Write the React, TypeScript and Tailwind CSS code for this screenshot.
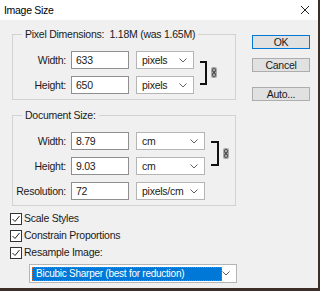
import React from 'react';

const font = { fontFamily: '"Liberation Sans", Arial, sans-serif' };

function Chevron() {
	return (
		<svg width="8" height="5" viewBox="0 0 8 5" className="shrink-0">
			<path d="M0.5 0.5 L4 4 L7.5 0.5" fill="none" stroke="#606060" strokeWidth="1" />
		</svg>
	);
}

function ChainIcon() {
	return (
		<svg width="6" height="11" viewBox="0 0 6 11" className="shrink-0">
			<rect x="0" y="0" width="6" height="11" rx="2" fill="#a9a9a9" />
			<rect x="1.5" y="1.5" width="3" height="3.5" rx="1.2" fill="none" stroke="#333" strokeWidth="0.8" />
			<rect x="1.5" y="6" width="3" height="3.5" rx="1.2" fill="none" stroke="#333" strokeWidth="0.8" />
			<line x1="3" y1="4" x2="3" y2="7" stroke="#333" strokeWidth="0.8" />
		</svg>
	);
}

function Field({ label, value, unit, selectW }: { label: string; value: string; unit: string; selectW: string }) {
	return (
		<div className="flex h-[18px] items-center">
			<span className="w-[54px] pr-[1px] text-right">{label}</span>
			<div className="ml-[4px] flex h-[18px] w-[58px] items-center border border-[#8f8f8f] bg-white pl-[4px]">{value}</div>
			<div className={`ml-[7px] flex h-[18px] ${selectW} items-center justify-between border border-[#b5b5b5] bg-white pl-[5px] pr-[6px]`}>
				<span>{unit}</span>
				<Chevron />
			</div>
		</div>
	);
}

function Check({ label }: { label: string }) {
	return (
		<div className="flex h-[17px] items-center">
			<div className="flex h-[12px] w-[12px] items-center justify-center border border-[#333] bg-white">
				<svg width="10" height="10" viewBox="0 0 10 10">
					<path d="M1.5 5 L4 7.5 L8.5 2" fill="none" stroke="#222" strokeWidth="1" />
				</svg>
			</div>
			<span className="ml-[2px]">{label}</span>
		</div>
	);
}

export default function App() {
	return (
		<div className="h-[291px] w-[320px] bg-[#3b2e26]" style={font}>
			<div className="flex h-[288px] w-[318px] flex-col bg-[#f0f0f0] text-[10.5px] leading-none tracking-[-0.25px] text-[#1a1a1a]">
				<div className="flex h-[20px] shrink-0 items-center justify-between bg-white pl-[4px] pr-[8px] text-[10.5px] tracking-[-0.3px] text-black">
					<span>Image Size</span>
					<svg width="10" height="10" viewBox="0 0 10 10">
						<path d="M1 1 L9 9 M9 1 L1 9" stroke="#222" strokeWidth="1" />
					</svg>
				</div>
				<div className="flex">
					<div className="flex flex-col pl-[12px]">
						<fieldset className="mt-[9px] h-[71px] w-[224px] border border-[#d3d3d3]">
							<legend className="ml-[9px] px-[3px] leading-[11px]">Pixel Dimensions:&nbsp;&nbsp;1.18M (was 1.65M)</legend>
							<div className="mt-[11px] flex items-center">
								<div className="flex flex-col gap-[7px]">
									<Field label="Width:" value="633" unit="pixels" selectW="w-[58px]" />
									<Field label="Height:" value="650" unit="pixels" selectW="w-[58px]" />
								</div>
								<div className="ml-[6px] h-[24px] w-[7px] border-y-2 border-r-2 border-[#111]" />
								<div className="ml-[4px]">
									<ChainIcon />
								</div>
							</div>
						</fieldset>
						<fieldset className="mt-[10px] h-[96px] w-[224px] border border-[#d3d3d3]">
							<legend className="ml-[9px] px-[3px] leading-[11px]">Document Size:</legend>
							<div className="mt-[11px] flex items-start">
								<div className="flex flex-col gap-[7px]">
									<Field label="Width:" value="8.79" unit="cm" selectW="w-[69px]" />
									<Field label="Height:" value="9.03" unit="cm" selectW="w-[69px]" />
									<Field label="Resolution:" value="72" unit="pixels/cm" selectW="w-[69px]" />
								</div>
								<div className="ml-[6px] mt-[9px] h-[25px] w-[8px] border-y-2 border-r-2 border-[#111]" />
								<div className="ml-[4px] mt-[16px]">
									<ChainIcon />
								</div>
							</div>
						</fieldset>
						<div className="-ml-[2px] mt-[4px] flex flex-col">
							<Check label="Scale Styles" />
							<Check label="Constrain Proportions" />
							<Check label="Resample Image:" />
						</div>
						<div className="ml-[17px] mt-[3px] flex h-[19px] w-[208px] items-center border border-[#b5b5b5] bg-white pl-[2px] pr-[6px]">
							<div className="flex h-[14px] w-[190px] items-center whitespace-nowrap border border-dotted border-[#e0601a] bg-[#0078d7] pl-[3px] text-[10px] text-white">
								Bicubic Sharper (best for reduction)
							</div>
							<div className="ml-auto">
								<Chevron />
							</div>
						</div>
					</div>
					<div className="ml-[15px] mt-[15px] flex flex-col">
						<button className="flex h-[14px] w-[58px] items-center justify-center border border-[#0078d7] bg-[#e1e1e1]">OK</button>
						<button className="mt-[9px] flex h-[14px] w-[58px] items-center justify-center border border-[#adadad] bg-[#e1e1e1]">Cancel</button>
						<button className="mt-[15px] flex h-[14px] w-[58px] items-center justify-center border border-[#adadad] bg-[#e1e1e1]">Auto...</button>
					</div>
				</div>
			</div>
		</div>
	);
}
